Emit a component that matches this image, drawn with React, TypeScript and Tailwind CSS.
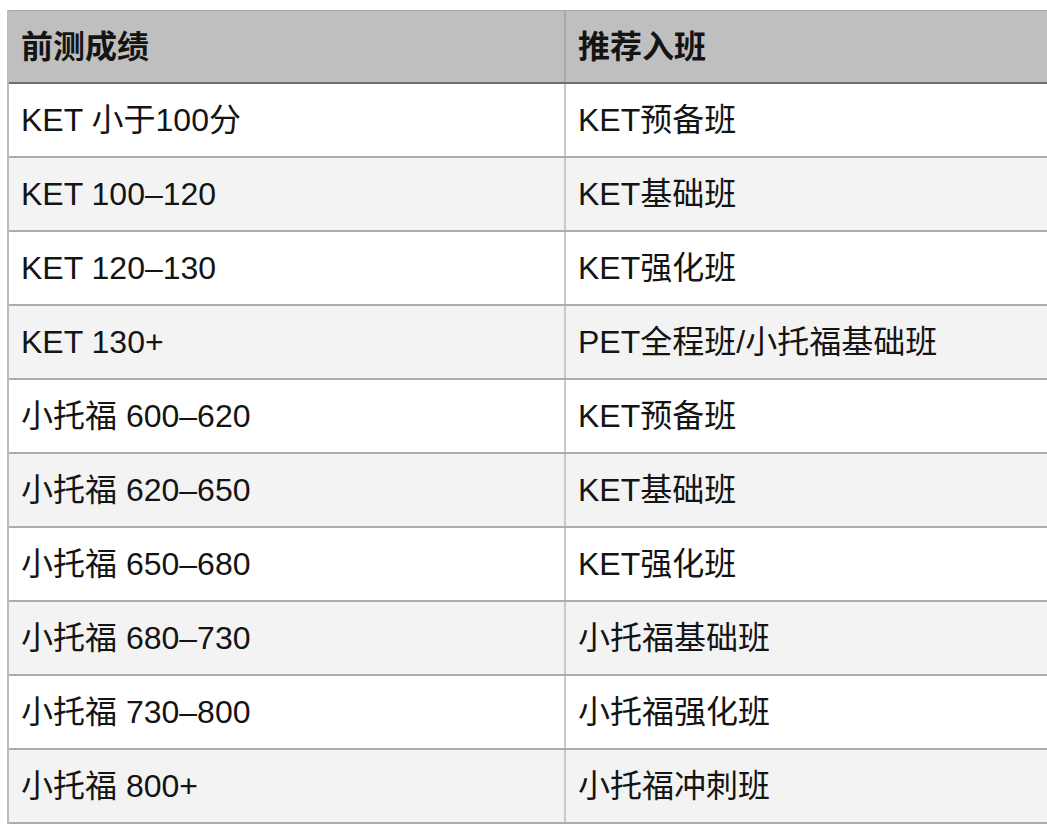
const rows: [string, string][] = [
  ['KET 小于100分', 'KET预备班'],
  ['KET 100–120', 'KET基础班'],
  ['KET 120–130', 'KET强化班'],
  ['KET 130+', 'PET全程班/小托福基础班'],
  ['小托福 600–620', 'KET预备班'],
  ['小托福 620–650', 'KET基础班'],
  ['小托福 650–680', 'KET强化班'],
  ['小托福 680–730', '小托福基础班'],
  ['小托福 730–800', '小托福强化班'],
  ['小托福 800+', '小托福冲刺班'],
];

export default function App() {
  return (
    <div
      className="w-[1047px] h-[830px] overflow-hidden bg-white pt-[10px] pl-[7px]"
      style={{ fontFamily: '"Liberation Sans", "Noto Sans CJK SC", sans-serif' }}
    >
      <div className="w-[1060px] border-l-2 border-[#bdbdbd] text-[32px] leading-none text-[#141414]">
        <div className="flex h-[74px] bg-[#bfbfbf] border-t border-[#a8a8a8] border-b-2 border-b-[#6f6f6f] font-bold">
          <div className="w-[557px] flex items-center pl-[12px] border-r-2 border-[#a9a9a9]">
            <span>前测成绩</span>
          </div>
          <div className="flex-1 flex items-center pl-[12px]">
            <span>推荐入班</span>
          </div>
        </div>
        {rows.map(([score, cls], i) => (
          <div
            key={i}
            className={`flex h-[74px] border-b-2 border-[#acacac] ${i % 2 === 0 ? 'bg-white' : 'bg-[#f3f3f3]'}`}
          >
            <div className="w-[557px] flex items-center pl-[12px] border-r-2 border-[#c9c9c9]">
              <span>{score}</span>
            </div>
            <div className="flex-1 flex items-center pl-[12px]">
              <span>{cls}</span>
            </div>
          </div>
        ))}
      </div>
    </div>
  );
}
